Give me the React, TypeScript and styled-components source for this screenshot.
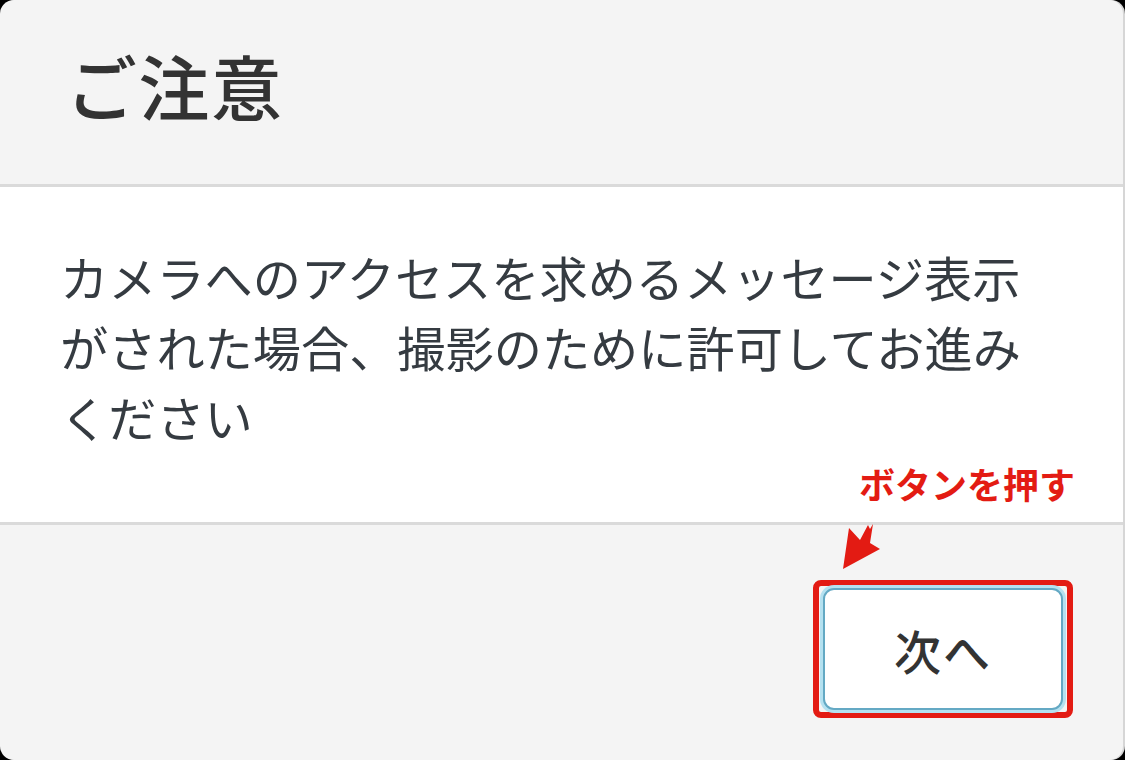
import React from "react"
import styled, { createGlobalStyle } from "styled-components"

const GlobalStyle = createGlobalStyle`
  html, body {
    margin: 0;
    padding: 0;
    background: #000;
  }
  body {
    font-family: "Noto Sans CJK JP", "Noto Sans", sans-serif;
  }
`

const Dialog = styled.div`
  display: flex;
  flex-direction: column;
  width: 1123px;
  height: 760px;
  background: #f4f4f4;
  border-radius: 14px;
  overflow: hidden;
  box-shadow: 2px 0 0 #d6d6d6;
`

const Header = styled.header`
  height: 187px;
  display: flex;
  align-items: center;
  padding: 0 0 16px 66px;
  box-sizing: border-box;
  border-bottom: 3px solid #dadada;
`

const Title = styled.h1`
  margin: 0;
  font-size: 71px;
  font-weight: 500;
  color: #333;
  letter-spacing: 1.5px;
`

const Body = styled.section`
  height: 338px;
  box-sizing: border-box;
  background: #fff;
  padding: 54px 50px 0 60px;
  border-bottom: 3px solid #dadada;
`

const Message = styled.p`
  margin: 0;
  font-size: 48.2px;
  line-height: 70px;
  color: #353b41;
`

const Footer = styled.footer`
  flex: 1;
  display: flex;
  justify-content: flex-end;
  align-items: flex-start;
  padding: 55px 50px 0 0;
`

const Highlight = styled.div`
  position: relative;
  padding: 2px 4px;
  border: 6px solid #e31b13;
  border-radius: 8px;
`

const NextButton = styled.button`
  display: block;
  width: 240px;
  height: 122px;
  background: #fff;
  border: 2px solid #64a9c4;
  border-radius: 11px;
  box-shadow: 0 0 0 3px #b5e1f0;
  font-family: inherit;
  font-size: 47px;
  font-weight: 500;
  color: #333;
  letter-spacing: 2px;
  cursor: pointer;
`

const Hint = styled.span`
  position: absolute;
  right: -8px;
  top: -129px;
  font-size: 36px;
  font-weight: 700;
  color: #e31b13;
  white-space: nowrap;
`

const Arrow = styled.svg`
  position: absolute;
  left: 11px;
  top: -71px;
`

export default function App() {
  return (
    <>
      <GlobalStyle />
      <Dialog>
        <Header>
          <Title>ご注意</Title>
        </Header>
        <Body>
          <Message>
            カメラへのアクセスを求めるメッセージ表示
            <br />
            がされた場合、撮影のために許可してお進み
            <br />
            ください
          </Message>
        </Body>
        <Footer>
          <Highlight>
            <Hint>ボタンを押す</Hint>
            <Arrow width="60" height="60" viewBox="0 0 60 60">
              <polygon
                points="13,54 19,13 30,25 38,10 40,14 43,9 40,28 50,34"
                fill="#e31b13"
              />
            </Arrow>
            <NextButton>次へ</NextButton>
          </Highlight>
        </Footer>
      </Dialog>
    </>
  )
}
